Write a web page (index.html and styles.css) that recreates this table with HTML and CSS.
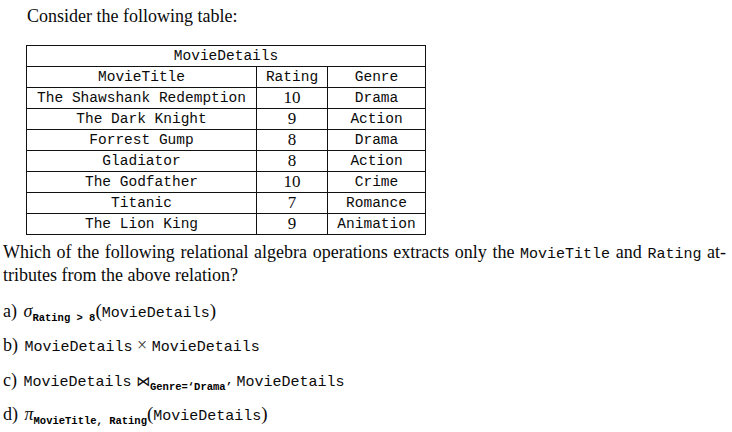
FILE: index.html
```
<!DOCTYPE html>
<html>
<head>
<meta charset="utf-8">
<link rel="stylesheet" href="styles.css">
</head>
<body>
<div class="page">
  <p class="intro">Consider the following table:</p>
  <table class="movies">
    <tr><th colspan="3">MovieDetails</th></tr>
    <tr><td class="c1">MovieTitle</td><td class="c2">Rating</td><td class="c3">Genre</td></tr>
    <tr><td>The Shawshank Redemption</td><td class="num">10</td><td>Drama</td></tr>
    <tr><td>The Dark Knight</td><td class="num">9</td><td>Action</td></tr>
    <tr><td>Forrest Gump</td><td class="num">8</td><td>Drama</td></tr>
    <tr><td>Gladiator</td><td class="num">8</td><td>Action</td></tr>
    <tr><td>The Godfather</td><td class="num">10</td><td>Crime</td></tr>
    <tr><td>Titanic</td><td class="num">7</td><td>Romance</td></tr>
    <tr><td>The Lion King</td><td class="num">9</td><td>Animation</td></tr>
  </table>
  <div class="question">
    <p class="qline first">Which of the following relational algebra operations extracts only the <span class="tt">MovieTitle</span> and <span class="tt">Rating</span> at-</p>
    <p class="qline">tributes from the above relation?</p>
  </div>
  <ol class="options">
    <li><span class="lbl">a)</span> <span class="mi">σ</span><sub class="tt">Rating &gt; 8</sub><span class="paren">(</span><span class="tt">MovieDetails</span><span class="paren">)</span></li>
    <li><span class="lbl">b)</span> <span class="tt">MovieDetails</span> <span class="op">×</span> <span class="tt">MovieDetails</span></li>
    <li><span class="lbl">c)</span> <span class="tt">MovieDetails</span> <span class="join">⋈</span><sub class="tt">Genre=‘Drama’</sub> <span class="tt">MovieDetails</span></li>
    <li><span class="lbl">d)</span> <span class="mi">π</span><sub class="tt">MovieTitle, Rating</sub><span class="paren">(</span><span class="tt">MovieDetails</span><span class="paren">)</span></li>
  </ol>
</div>
</body>
</html>
```
FILE: styles.css
```
html, body {
  margin: 0;
  padding: 0;
  background: #fff;
}
body {
  font-family: "Liberation Serif", "DejaVu Serif", serif;
  color: #0a0a0a;
  font-size: 18px;
}
.page {
  padding: 0 6px 0 3px;
}
.intro {
  margin: 5px 0 0 24px;
  line-height: 22px;
}
.movies {
  border-collapse: collapse;
  margin: 18px 0 0 23px;
  font-family: "Liberation Mono", "DejaVu Sans Mono", monospace;
  font-size: 14.5px;
}
.movies th, .movies td {
  border: 1px solid #111;
  text-align: center;
  padding: 0;
  height: 20px;
  line-height: 20px;
  font-weight: normal;
}
.movies .c1 { width: 229px; }
.movies .c2 { width: 70px; }
.movies .c3 { width: 97px; }
.movies .num {
  font-family: "Liberation Serif", "DejaVu Serif", serif;
  font-size: 17px;
}
.tt {
  font-family: "Liberation Mono", "DejaVu Sans Mono", monospace;
  font-size: 15px;
}
.question {
  margin: 7px 0 0 0;
}
.qline {
  margin: 0;
  line-height: 21px;
}
.qline.first {
  text-align: justify;
  text-align-last: justify;
}
.options {
  list-style: none;
  margin: 14px 0 0 0;
  padding: 0;
}
.options li {
  height: 34.4px;
  line-height: 22px;
}
.lbl { margin-right: 2px; }
.mi {
  font-style: italic;
}
sub.tt {
  font-size: 10.5px;
  font-weight: bold;
  vertical-align: -4px;
  color: #000;
}
.paren { font-size: 19px; }
.op { color: #333; }
.join {
  font-family: "DejaVu Sans", sans-serif;
  font-size: 14px;
}
```
